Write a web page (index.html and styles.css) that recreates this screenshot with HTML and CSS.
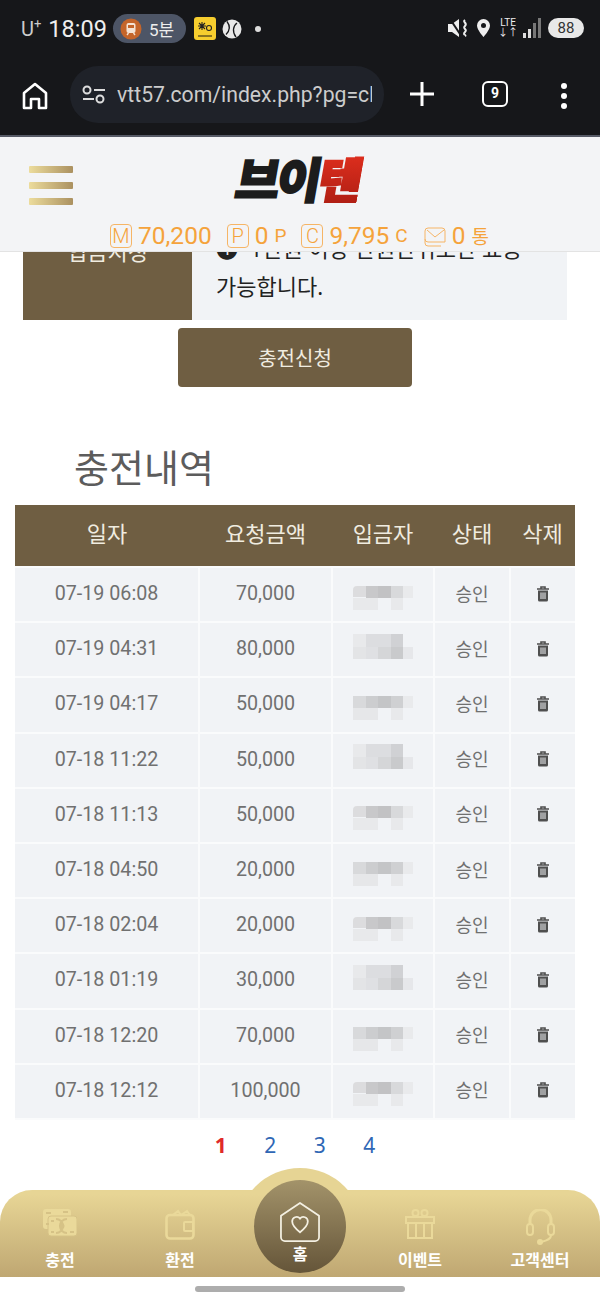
FILE: index.html
```html
<!DOCTYPE html>
<html lang="ko">
<head>
    <meta charset="UTF-8">
    <meta name="viewport" content="width=device-width, initial-scale=1">
    <title>충전내역</title>
    <link rel="stylesheet" href="styles.css">
</head>
<body>
    <svg class="defs" width="0" height="0">
        <symbol id="trash" viewBox="0 0 14 16">
            <path d="M1 3h12M5 3V1h4v2" fill="none" stroke="#4f4f4f" stroke-width="1.6"/>
            <path d="M2 4.500h10V14a1.500 1.500 0 0 1-1.500 1.500h-7A1.500 1.500 0 0 1 2 14z" fill="#4f4f4f"/>
            <path d="M5 6.500v6.500M7 6.500v6.500M9 6.500v6.500" stroke="#f1f3f6" stroke-width="1"/>
        </symbol>
        <!-- blurred depositor names -->
        <symbol id="m1" viewBox="0 0 60 34">
            <path d="M0 20v-7a4 4 0 0 1 4-4h9v11z" fill="#dcdcde"/>
            <rect x="13" y="9" width="12" height="12" fill="#c8c8ca"/>
            <rect x="25" y="9" width="13" height="12" fill="#c2c2c4"/>
            <rect x="38" y="9" width="12" height="12" fill="#d8d9db"/>
            <rect x="50" y="9" width="10" height="12" fill="#e9eaec"/>
            <rect x="0" y="21" width="25" height="12" fill="#e8e9eb"/>
            <rect x="38" y="21" width="12" height="12" fill="#e8e9eb"/>
        </symbol>
        <symbol id="m2" viewBox="0 0 60 34">
            <rect x="0" y="2" width="13" height="13" fill="#e8e9eb"/>
            <rect x="13" y="2" width="25" height="13" fill="#dcdde0"/>
            <rect x="38" y="2" width="12" height="13" fill="#d0d1d4"/>
            <rect x="0" y="15" width="13" height="12" fill="#e3e4e6"/>
            <rect x="13" y="15" width="12" height="12" fill="#dfe0e3"/>
            <rect x="25" y="15" width="13" height="12" fill="#d5d6d8"/>
            <rect x="38" y="15" width="12" height="12" fill="#c9cacc"/>
            <rect x="50" y="15" width="10" height="12" fill="#e6e7ea"/>
        </symbol>
        <symbol id="m3" viewBox="0 0 60 34">
            <rect x="0" y="9" width="13" height="12" fill="#d8d9db"/>
            <rect x="13" y="9" width="12" height="12" fill="#cccdcf"/>
            <rect x="25" y="9" width="13" height="12" fill="#c4c5c7"/>
            <rect x="38" y="9" width="12" height="12" fill="#cfd0d2"/>
            <rect x="50" y="9" width="10" height="12" fill="#e9eaec"/>
            <rect x="0" y="21" width="25" height="12" fill="#e6e7e9"/>
            <rect x="38" y="21" width="12" height="12" fill="#e8e9eb"/>
        </symbol>
    </svg>

    <div class="chrome">
        <div class="status">
            <span class="carrier">U<sup>+</sup></span>
            <span class="clock">18:09</span>
            <span class="pill">
                <svg width="22" height="22" viewBox="0 0 22 22"><circle cx="11" cy="11" r="10.500" fill="#c4652a"/><rect x="6.500" y="5" width="9" height="10" rx="2" fill="#f4e3d4"/><rect x="8" y="7" width="6" height="3" fill="#c4652a"/><path d="M7 17l1.500-2M15 17l-1.500-2" stroke="#f4e3d4" stroke-width="1.300"/></svg>
                5분
            </span>
            <svg class="app-yellow" width="22" height="23" viewBox="0 0 22 23"><rect width="22" height="23" rx="3" fill="#f6cd2e"/><path d="M4 9h8M8 5v8M5 6l6 6M11 6l-6 6" stroke="#222" stroke-width="1.100"/><circle cx="15" cy="11" r="2.500" fill="none" stroke="#222" stroke-width="1.100"/><rect x="4" y="18" width="14" height="2" fill="#8a7420"/></svg>
            <svg class="app-ball" width="20" height="20" viewBox="0 0 20 20"><circle cx="10" cy="10" r="9.500" fill="#e8e8e8"/><path d="M5 2.500c3 4 3 9-1 13M15 4c-4 3-5 9-1 14" fill="none" stroke="#16171a" stroke-width="1.300"/></svg>
            <span class="dot"></span>
            <span class="status-right">
                <svg width="21" height="20" viewBox="0 0 21 20"><path d="M0 6h4l7-5v18l-7-5H0z" fill="#eee"/><path d="M2 1l12 18" stroke="#16171a" stroke-width="2"/><path d="M17 2c-3 2 3 3 0 6s3 3 0 6 2 3 0 4" fill="none" stroke="#eee" stroke-width="2"/></svg>
                <svg width="15" height="20" viewBox="0 0 15 20"><path d="M7.500 1a6.500 6.500 0 0 0-6.500 6.500c0 4.500 6.500 11.500 6.500 11.500s6.500-7 6.500-11.500A6.500 6.500 0 0 0 7.500 1z" fill="#eee"/><circle cx="7.500" cy="7.500" r="2.500" fill="#16171a"/></svg>
                <span class="lte">LTE<br>↓↑</span>
                <svg class="signal" width="18" height="22" viewBox="0 0 18 22"><rect x="0" y="16" width="3" height="5" fill="#ddd"/><rect x="5" y="12" width="3" height="9" fill="#ddd"/><rect x="10" y="6" width="3" height="15" fill="#777"/><rect x="15" y="1" width="3" height="20" fill="#777"/></svg>
                <span class="battery">88</span>
            </span>
        </div>
        <div class="toolbar">
            <svg class="home-icon" width="26" height="28" viewBox="0 0 26 28"><path d="M2 26V11L13 2l11 9v15h-7v-9H9v9z" fill="none" stroke="#fff" stroke-width="2.600" stroke-linejoin="round"/></svg>
            <div class="urlbar">
                <svg width="24" height="20" viewBox="0 0 24 20"><circle cx="5" cy="5" r="3.500" fill="none" stroke="#ddd" stroke-width="2"/><path d="M12 5h11M1 14h11" stroke="#ddd" stroke-width="2"/><circle cx="18" cy="14" r="3.500" fill="none" stroke="#ddd" stroke-width="2"/></svg>
                <span class="url">vtt57.com/index.php?pg=ch</span>
            </div>
            <svg class="plus" width="24" height="24" viewBox="0 0 24 24"><path d="M12 0v24M0 12h24" stroke="#fff" stroke-width="3"/></svg>
            <span class="tabs">9</span>
            <span class="more"><i></i><i></i><i></i></span>
        </div>
    </div>

    <header class="site-header">
        <div class="burger"><i></i><i></i><i></i></div>
        <div class="logo">브이<em>텐</em></div>
        <div class="balance">
            <span class="box">M</span><b>70,200</b>
            <span class="box">P</span><b>0</b><small>P</small>
            <span class="box">C</span><b>9,795</b><small>C</small>
            <svg class="box-mail" width="22" height="24" viewBox="0 0 22 24"><path d="M4 4h14a3 3 0 0 1 3 3v11H4a3 3 0 0 1-3-3V7a3 3 0 0 1 3-3z" fill="none" stroke="#f6b566"/><path d="M3 6l8 7 9-7" fill="none" stroke="#f6b566"/><path d="M1 15v4a3 3 0 0 0 3 3h13" fill="none" stroke="#f6b566"/></svg><b>0</b><small>통</small>
        </div>
    </header>

    <main class="content">
        <div class="notice">
            <div class="notice-label">입금지정</div>
            <div class="notice-text"><span class="bullet">❶</span> 1만원 이상 만원단위로만 표용 가능합니다.</div>
        </div>
        <div class="submit-row"><button class="submit">충전신청</button></div>

        <h2 class="title">충전내역</h2>

        <table class="history">
            <thead>
                <tr><th>일자</th><th>요청금액</th><th>입금자</th><th>상태</th><th>삭제</th></tr>
            </thead>
            <tbody>
                <tr><td>07-19 06:08</td><td>70,000</td><td><svg class="mosaic"><use href="#m1"/></svg></td><td class="state">승인</td><td><svg class="trash"><use href="#trash"/></svg></td></tr>
                <tr><td>07-19 04:31</td><td>80,000</td><td><svg class="mosaic"><use href="#m2"/></svg></td><td class="state">승인</td><td><svg class="trash"><use href="#trash"/></svg></td></tr>
                <tr><td>07-19 04:17</td><td>50,000</td><td><svg class="mosaic"><use href="#m3"/></svg></td><td class="state">승인</td><td><svg class="trash"><use href="#trash"/></svg></td></tr>
                <tr><td>07-18 11:22</td><td>50,000</td><td><svg class="mosaic"><use href="#m2"/></svg></td><td class="state">승인</td><td><svg class="trash"><use href="#trash"/></svg></td></tr>
                <tr><td>07-18 11:13</td><td>50,000</td><td><svg class="mosaic"><use href="#m1"/></svg></td><td class="state">승인</td><td><svg class="trash"><use href="#trash"/></svg></td></tr>
                <tr><td>07-18 04:50</td><td>20,000</td><td><svg class="mosaic"><use href="#m3"/></svg></td><td class="state">승인</td><td><svg class="trash"><use href="#trash"/></svg></td></tr>
                <tr><td>07-18 02:04</td><td>20,000</td><td><svg class="mosaic"><use href="#m1"/></svg></td><td class="state">승인</td><td><svg class="trash"><use href="#trash"/></svg></td></tr>
                <tr><td>07-18 01:19</td><td>30,000</td><td><svg class="mosaic"><use href="#m2"/></svg></td><td class="state">승인</td><td><svg class="trash"><use href="#trash"/></svg></td></tr>
                <tr><td>07-18 12:20</td><td>70,000</td><td><svg class="mosaic"><use href="#m3"/></svg></td><td class="state">승인</td><td><svg class="trash"><use href="#trash"/></svg></td></tr>
                <tr><td>07-18 12:12</td><td>100,000</td><td><svg class="mosaic"><use href="#m1"/></svg></td><td class="state">승인</td><td><svg class="trash"><use href="#trash"/></svg></td></tr>
            </tbody>
        </table>

        <div class="pages"><b>1</b><a>2</a><a>3</a><a>4</a></div>
    </main>

    <nav class="tabbar">
        <div class="hump"></div>
        <div class="tabbar-body">
            <div class="tab">
                <div class="tab-icon">
                    <svg width="34" height="28" viewBox="0 0 34 28"><rect x="0" y="0" width="28" height="20" rx="3" fill="#ead99a"/><rect x="5" y="7" width="29" height="20" rx="3" fill="#ead99a" stroke="#d6c286" stroke-width="1"/><path d="M13 10a7 7 0 0 1 0 14M24 10a7 7 0 0 0 0 14" fill="none" stroke="#d6c286" stroke-width="2"/><path d="M3 4h5M3 15h3M20 3h5M8 12h3M27 23h4M8 23h3" stroke="#d6c286" stroke-width="2"/><circle cx="19" cy="17" r="2.500" fill="#d6c286"/></svg>
                </div>
                <span>충전</span>
            </div>
            <div class="tab">
                <div class="tab-icon">
                    <svg width="30" height="31" viewBox="0 0 30 31"><path d="M8 6l5-4 3 4M16 6l6-4 3 4" fill="none" stroke="#ead99a" stroke-width="2"/><rect x="1.500" y="6" width="27" height="23.500" rx="3.500" fill="none" stroke="#ead99a" stroke-width="2.600"/><rect x="19" y="13" width="9" height="9" rx="1" fill="none" stroke="#ead99a" stroke-width="2"/></svg>
                </div>
                <span>환전</span>
            </div>
            <div class="tab tab-home">
                <svg width="42" height="41" viewBox="0 0 42 42"><path d="M1.500 14L21 1l19.500 13v22a4 4 0 0 1-4 4h-31a4 4 0 0 1-4-4z" fill="none" stroke="#f4f0e2" stroke-width="1.800" stroke-linejoin="round"/><path d="M21 31c-5-4-8-7-8-11a4.500 4.500 0 0 1 8-3 4.500 4.500 0 0 1 8 3c0 4-3 7-8 11z" fill="none" stroke="#f4f0e2" stroke-width="1.800"/></svg>
                <span>홈</span>
            </div>
            <div class="tab">
                <div class="tab-icon">
                    <svg width="30" height="30" viewBox="0 0 30 30"><circle cx="10.500" cy="4" r="3" fill="none" stroke="#ead99a" stroke-width="2"/><circle cx="19.500" cy="4" r="3" fill="none" stroke="#ead99a" stroke-width="2"/><rect x="1" y="8" width="28" height="6" fill="none" stroke="#ead99a" stroke-width="2"/><rect x="3" y="14" width="24" height="15" fill="none" stroke="#ead99a" stroke-width="2"/><path d="M11 14v15M19 14v15" stroke="#ead99a" stroke-width="2"/></svg>
                </div>
                <span>이벤트</span>
            </div>
            <div class="tab">
                <div class="tab-icon">
                    <svg width="29" height="36" viewBox="0 0 29 36"><path d="M4 16V11a10.500 10.500 0 0 1 21 0v5" fill="none" stroke="#ead99a" stroke-width="3"/><rect x="1" y="15" width="6" height="11" rx="3" fill="none" stroke="#ead99a" stroke-width="2"/><rect x="22" y="15" width="6" height="11" rx="3" fill="none" stroke="#ead99a" stroke-width="2"/><path d="M25 26c0 5-6 6-10 7" fill="none" stroke="#ead99a" stroke-width="2"/><circle cx="14" cy="33" r="3" fill="#ead99a"/></svg>
                </div>
                <span>고객센터</span>
            </div>
        </div>
    </nav>
    <div class="home-bar"></div>
</body>
</html>
```

FILE: styles.css
```css
* {
    box-sizing: border-box;
}

body {
    font-family: "Noto Sans", "Noto Sans CJK KR", sans-serif;
    margin: 0;
    width: 600px;
    height: 1300px;
    position: relative;
    overflow: hidden;
    background-color: #fff;
}

.defs {
    position: absolute;
}

/* phone + browser chrome */
.chrome {
    height: 137px;
    background-color: #16171a;
    border-bottom: 2px solid #565a66;
    color: #eee;
}

.status {
    height: 60px;
    padding: 14px 16px 0 21px;
    display: flex;
    align-items: flex-start;
    font-family: Roboto, "Noto Sans CJK KR", sans-serif;
}

.carrier {
    font-size: 20px;
    line-height: 30px;
    margin-right: 7px;
    color: #ccc;
}

.carrier sup {
    font-size: 13px;
    line-height: 0;
}

.clock {
    font-size: 23.500px;
    line-height: 30px;
    margin-right: 6px;
}

.pill {
    width: 73px;
    height: 29px;
    border-radius: 15px;
    background-color: #4d5566;
    display: flex;
    align-items: center;
    gap: 7px;
    padding-left: 7px;
    font-size: 17px;
    margin-right: 8px;
}

.app-yellow {
    margin: 3px 6px 0 0;
}

.app-ball {
    margin: 5px 0 0 0;
}

.dot {
    width: 6px;
    height: 6px;
    border-radius: 50%;
    background-color: #ddd;
    margin: 12px 0 0 13px;
}

.status-right {
    margin-left: auto;
    display: flex;
    align-items: center;
    gap: 7px;
    height: 28px;
}

.signal {
    margin-left: -2px;
}

.lte {
    font-size: 10px;
    line-height: 10px;
    text-align: center;
}

.battery {
    width: 36px;
    height: 20px;
    border-radius: 10px;
    background-color: #e8e8e8;
    color: #333;
    font-size: 15px;
    line-height: 20px;
    text-align: center;
}

.toolbar {
    height: 75px;
    display: flex;
    align-items: flex-start;
    padding: 6px 0 0 22px;
}

.home-icon {
    margin-top: 16px;
}

.urlbar {
    width: 314px;
    height: 57px;
    margin-left: 22px;
    border-radius: 28px;
    background-color: #1f2229;
    display: flex;
    align-items: center;
    padding-left: 12px;
    gap: 11px;
    overflow: hidden;
}

.url {
    font-size: 21.200px;
    color: #ccc;
    font-family: Roboto, sans-serif;
    width: 255px;
    flex-shrink: 0;
    overflow: hidden;
    white-space: nowrap;
}

.plus {
    margin: 16px 0 0 26px;
}

.tabs {
    width: 26px;
    height: 26px;
    margin: 15px 0 0 48px;
    border: 2.500px solid #fff;
    border-radius: 6px;
    color: #fff;
    font-size: 14px;
    font-weight: 700;
    line-height: 21px;
    text-align: center;
    font-family: Roboto, sans-serif;
}

.more {
    margin: 17px 0 0 53px;
    display: flex;
    flex-direction: column;
    gap: 4px;
}

.more i {
    display: block;
    width: 6px;
    height: 6px;
    border-radius: 50%;
    background-color: #fff;
}

/* site header lies over the scrolled page */
.site-header {
    position: absolute;
    top: 137px;
    left: 0;
    width: 600px;
    height: 115px;
    z-index: 2;
    background-color: #f3f4f6;
    border-bottom: 1px solid #e3e3e3;
}

.burger {
    position: absolute;
    top: 29px;
    left: 29px;
    display: flex;
    flex-direction: column;
    gap: 9px;
}

.burger i {
    display: block;
    width: 44px;
    height: 7px;
    border-radius: 1px;
    background: linear-gradient(90deg, #ecdc9c, #ab9160);
}

.logo {
    position: absolute;
    top: 5px;
    left: 237px;
    font-size: 48px;
    font-weight: 900;
    line-height: 70px;
    letter-spacing: -3px;
    color: #1c1c1c;
    -webkit-text-stroke: 2px #1c1c1c;
    transform: skewX(-10deg);
    font-family: "Noto Sans CJK KR", sans-serif;
    white-space: nowrap;
}

.logo em {
    font-style: normal;
    color: transparent;
    -webkit-text-stroke: 2px transparent;
    background: linear-gradient(180deg, #e93220, #a81c12);
    -webkit-background-clip: text;
    background-clip: text;
}

.balance {
    position: absolute;
    top: 85px;
    left: 110px;
    display: flex;
    align-items: center;
    color: #f5a33b;
    font-family: Roboto, "Noto Sans CJK KR", sans-serif;
}

.balance b {
    font-weight: 400;
    font-size: 24.500px;
    line-height: 26px;
    margin-left: 6px;
}

.balance small {
    font-size: 19px;
    margin-left: 6px;
}

.box {
    width: 22px;
    height: 24px;
    border: 1px solid #f6b566;
    border-radius: 4px;
    font-size: 20px;
    font-weight: 300;
    line-height: 22px;
    text-align: center;
    margin-left: 15px;
}

.box:first-child {
    margin-left: 0;
}

.box-mail {
    margin-left: 16px;
}

/* page */
.notice {
    display: flex;
    margin: 0 33px 0 23px;
    height: 183px;
    align-items: stretch;
}

.notice-label {
    width: 169px;
    background-color: #6f5e42;
    color: #f0ece0;
    font-size: 22px;
    text-align: center;
    padding-top: 97px;
}

.notice-text {
    flex: 1;
    background-color: #f1f3f6;
    color: #222;
    font-size: 22px;
    line-height: 38px;
    padding: 92px 36px 0 24px;
}

.bullet {
    margin-right: 6px;
}

.submit-row {
    display: flex;
    justify-content: center;
    margin-top: 8px;
    padding-right: 10px;
}

.submit {
    width: 234px;
    height: 59px;
    border: none;
    border-radius: 4px;
    background-color: #6f5e42;
    color: #f0ece0;
    font-size: 20px;
    font-family: "Noto Sans CJK KR", sans-serif;
}

.title {
    margin: 54px 0 14px 74px;
    font-size: 38px;
    font-weight: 400;
    line-height: 50px;
    color: #5c5c5c;
    font-family: "Noto Sans CJK KR", sans-serif;
}

.history {
    width: 560px;
    margin-left: 15px;
    table-layout: fixed;
    border-collapse: collapse;
}

.history th:nth-child(1) { width: 184px; }
.history th:nth-child(2) { width: 133px; }
.history th:nth-child(3) { width: 102px; }
.history th:nth-child(4) { width: 76px; }

.history th {
    height: 62px;
    padding: 0 0 7px;
    background-color: #6f5e42;
    color: #f0ece0;
    font-size: 22px;
    font-weight: 400;
}

.history td {
    height: 55.200px;
    padding: 0 0 2px;
    background-color: #f1f3f6;
    border: 2px solid #fafbfc;
    color: #707070;
    font-size: 19.700px;
    font-family: Roboto, "Noto Sans CJK KR", sans-serif;
    text-align: center;
}

.history td.state {
    font-size: 18px;
    padding-bottom: 4px;
}

.history td:first-child {
    border-left: none;
}

.history td:last-child {
    border-right: none;
}

.trash {
    display: block;
    width: 14px;
    height: 16px;
    margin: 0 auto;
}

.mosaic {
    display: block;
    width: 60px;
    height: 34px;
    margin: 0 auto;
}

.pages {
    display: flex;
    gap: 37.500px;
    justify-content: center;
    margin-top: 10px;
    padding-right: 10px;
    font-size: 21px;
    line-height: 30px;
}

.pages b {
    color: #e02a2a;
}

.pages a {
    color: #2f67b5;
}

/* bottom nav */
.tabbar {
    position: absolute;
    left: 0;
    top: 1168px;
    width: 600px;
    height: 109px;
}

.hump {
    position: absolute;
    left: 237px;
    top: 0;
    width: 126px;
    height: 126px;
    border-radius: 50%;
    background-color: #e6d494;
    clip-path: inset(0 0 70% 0);
}

.tabbar-body {
    position: absolute;
    left: 0;
    right: 0;
    top: 22px;
    bottom: 0;
    border-radius: 32px 32px 0 0;
    background: linear-gradient(180deg, #e7d595 5%, #bfa772);
    display: grid;
    grid-template-columns: repeat(5, 120px);
}

.tab {
    display: flex;
    flex-direction: column;
    align-items: center;
    color: #fff;
    font-size: 16px;
    font-weight: 700;
    line-height: 22px;
    padding-top: 19px;
    font-family: "Noto Sans CJK KR", sans-serif;
}

.tab-icon {
    height: 39px;
}

.tab-icon svg {
    display: block;
}

.tab-home {
    position: relative;
    padding-top: 12px;
}

.tab-home::before {
    content: "";
    position: absolute;
    left: 14px;
    top: -10px;
    width: 92px;
    height: 93px;
    border-radius: 50%;
    background: linear-gradient(180deg, #a3936a, #655539);
}

.tab-home svg,
.tab-home span {
    position: relative;
}

.tab-home span {
    margin-top: -1px;
}

.home-bar {
    position: absolute;
    left: 195px;
    top: 1286px;
    width: 210px;
    height: 6px;
    border-radius: 3px;
    background-color: #adadad;
}
```
